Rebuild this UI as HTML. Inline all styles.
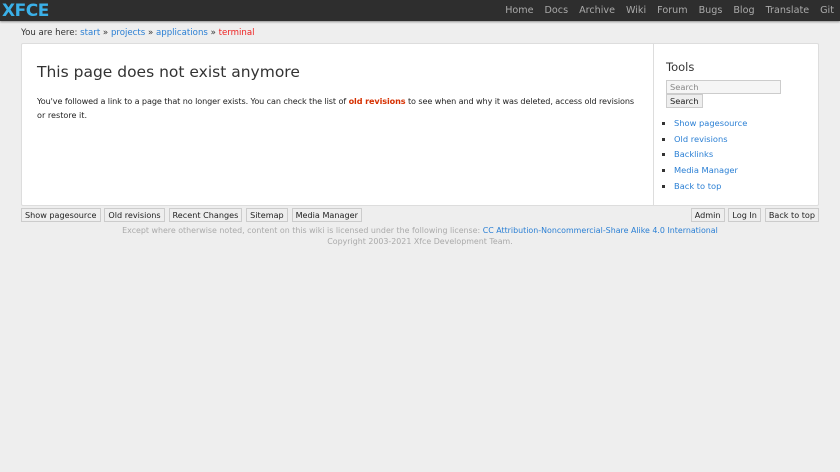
<!DOCTYPE html>
<html><head><meta charset="utf-8"><style>
*{margin:0;padding:0;box-sizing:border-box}
body{width:840px;height:472px;background:#eeeeee;font-family:"DejaVu Sans","Liberation Sans",sans-serif;font-size:9px;color:#333;position:relative;overflow:hidden}
a{color:#2a7fd4;text-decoration:none}
.top{position:absolute;left:0;top:0;width:840px;height:21px;background:#2e2e2e;box-shadow:0 1px 2px rgba(0,0,0,.4)}
.logo{position:absolute;left:2px;top:1px;font:bold 17px "DejaVu Sans",sans-serif;color:#3ab0e8;letter-spacing:-0.5px}
.nav{position:absolute;right:0;top:5px;font-size:9.6px;color:#aaa}
.nav span{margin:0 6px 0 5px}
.crumb{position:absolute;left:21px;top:28px;font-size:8.6px;color:#333}
.box{position:absolute;left:21px;top:43px;width:798px;height:163px;background:#fff;border:1px solid #ddd;border-radius:2px}
.side{position:absolute;left:631px;top:0;bottom:0;border-left:1px solid #ddd;width:165px}
h1{position:absolute;left:15px;top:19px;font-size:15.5px;font-weight:normal;color:#333}
.txt{position:absolute;left:15px;top:50px;width:640px;line-height:14px;font-size:8.1px;color:#222;white-space:nowrap}
.txt b{color:#d63000}
.tools{position:absolute;left:12px;top:16px;font-size:11.5px;color:#333}
.sin{position:absolute;left:12px;top:36px;width:115px;height:14px;border:1px solid #ccc;background:#f5f5f5;font-size:8.3px;color:#888;padding:1px 3px}
.btn{display:inline-block;border:1px solid #ccc;background:#eee;font-size:8.1px;color:#222;padding:1px 3px;height:14px;line-height:11px;margin-right:1px}
.ul{position:absolute;left:20px;top:72px;font-size:8.3px;line-height:15.7px;list-style:square}
.bb{position:absolute;top:208px}
.foot{position:absolute;left:0;width:840px;text-align:center;font-size:7.9px;color:#aaa}
</style></head><body>
<div class="top"><div class="logo">XFCE</div>
<div class="nav"><span>Home</span><span>Docs</span><span>Archive</span><span>Wiki</span><span>Forum</span><span>Bugs</span><span>Blog</span><span>Translate</span><span>Git</span></div></div>
<div class="crumb">You are here: <a>start</a> » <a>projects</a> » <a>applications</a> » <a style="color:#e22">terminal</a></div>
<div class="box">
<h1>This page does not exist anymore</h1>
<div class="txt"><span style="letter-spacing:-0.1px">You've followed a link to a page that no longer exists. You can check the list of <b>old revisions</b> to see when and why it was deleted, access old revisions</span><br>or restore it.</div>
<div class="side">
<div class="tools">Tools</div>
<div class="sin">Search</div>
<div class="btn" style="position:absolute;left:12px;top:50px;font-size:8.3px">Search</div>
<ul class="ul"><li><a>Show pagesource</a></li><li><a>Old revisions</a></li><li><a>Backlinks</a></li><li><a>Media Manager</a></li><li><a>Back to top</a></li></ul>
</div></div>
<div class="bb" style="left:21px"><span class="btn">Show pagesource</span> <span class="btn">Old revisions</span> <span class="btn">Recent Changes</span> <span class="btn">Sitemap</span> <span class="btn">Media Manager</span></div>
<div class="bb" style="right:21px"><span class="btn">Admin</span> <span class="btn">Log In</span> <span class="btn" style="margin-right:0">Back to top</span></div>
<div class="foot" style="top:226px">Except where otherwise noted, content on this wiki is licensed under the following license: <a>CC Attribution-Noncommercial-Share Alike 4.0 International</a></div>
<div class="foot" style="top:237px">Copyright 2003-2021 Xfce Development Team.</div>
</body></html>
